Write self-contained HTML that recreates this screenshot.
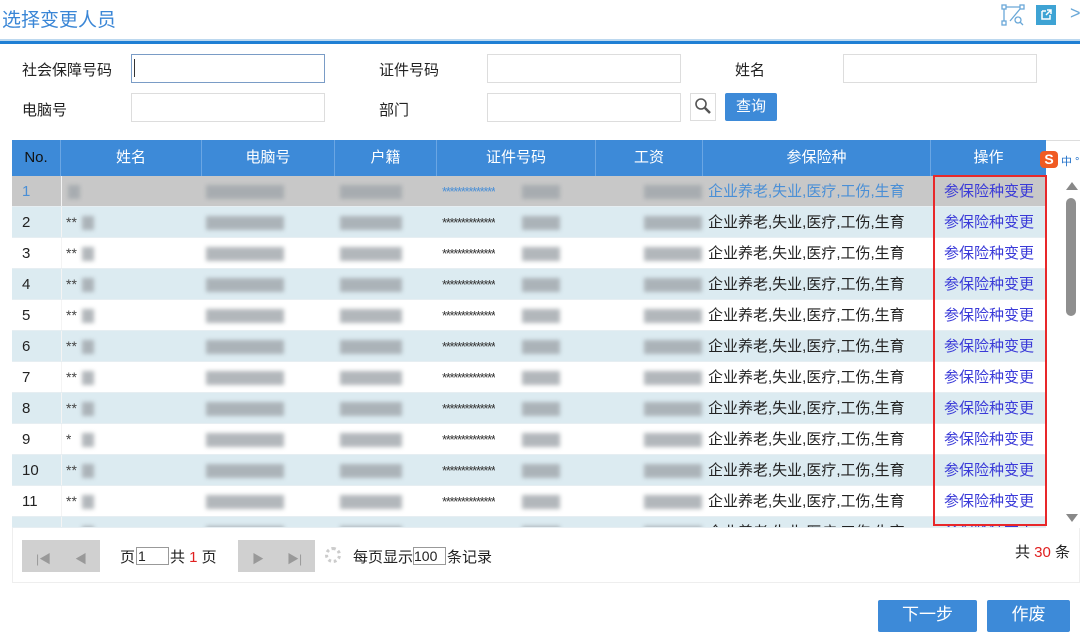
<!DOCTYPE html>
<html><head><meta charset="utf-8"><style>
*{margin:0;padding:0;box-sizing:border-box}
body{width:1080px;height:630px;background:#fff;position:relative;overflow:hidden;font-family:"Liberation Sans","Noto Sans CJK SC",sans-serif;font-size:14px;color:#222}
.a{position:absolute}
.lbl{font-size:15px;color:#222}
.inp{position:absolute;height:29px;border:1px solid #ddd;background:#fff}
.hd{position:absolute;top:140px;height:36px;background:#3d8ad8;color:#fff;font-size:15px;text-align:center;line-height:36px;border-right:1px solid #6aa6e4}
.row{position:absolute;left:12px;width:1034px;height:31px;border-bottom:1px solid #e6eef2}
.c{position:absolute;top:0;height:31px;line-height:31px;font-size:14px;white-space:nowrap;overflow:hidden}
.bl{position:absolute;background:#a0a6ab;filter:blur(2px);opacity:.8;height:14px;top:9px}
.btn{position:absolute;background:#3d8ad8;color:#fff;text-align:center;border-radius:2px}
</style></head><body>
<div class="a" style="left:2px;top:5px;font-size:19px;color:#3a86d6">选择变更人员</div>
<svg class="a" style="left:1000px;top:3px" width="26" height="24" viewBox="0 0 26 24"><g fill="none" stroke="#6aa8d8" stroke-width="1.3"><rect x="2" y="2" width="4" height="4"/><rect x="20" y="2" width="4" height="4"/><rect x="2" y="18" width="4" height="4"/><path d="M6 4H20M4 6V18M20 6L10 18"/><circle cx="18" cy="17" r="3"/><path d="M20 19l3 3"/></g></svg>
<div class="a" style="left:1036px;top:5px;width:20px;height:20px;background:#3ea3d4"></div>
<svg class="a" style="left:1036px;top:5px" width="20" height="20"><path d="M6 6h4M6 6v8h8v-4M10 10l5-5M11 5h4v4" stroke="#fff" stroke-width="1.5" fill="none"/></svg>
<div class="a" style="left:1070px;top:3px;font-size:18px;color:#6aa8d8">&gt;</div>
<div class="a" style="left:0;top:39px;width:1080px;height:2px;background:#bcd8ef"></div>
<div class="a" style="left:0;top:41px;width:1080px;height:3px;background:#1f7fd4"></div>

<div class="a lbl" style="left:22px;top:59px">社会保障号码</div>
<div class="inp" style="left:131px;top:54px;width:194px;border-color:#7a9cc6"></div>
<div class="a" style="left:134px;top:59px;width:1px;height:18px;background:#333"></div>
<div class="a lbl" style="left:379px;top:59px">证件号码</div>
<div class="inp" style="left:487px;top:54px;width:194px"></div>
<div class="a lbl" style="left:735px;top:59px">姓名</div>
<div class="inp" style="left:843px;top:54px;width:194px"></div>
<div class="a lbl" style="left:22px;top:99px">电脑号</div>
<div class="inp" style="left:131px;top:93px;width:194px"></div>
<div class="a lbl" style="left:379px;top:99px">部门</div>
<div class="inp" style="left:487px;top:93px;width:194px"></div>
<div class="inp" style="left:690px;top:93px;width:26px;height:28px"></div>
<svg class="a" style="left:693px;top:96px" width="20" height="20"><circle cx="8" cy="8" r="5" stroke="#555" stroke-width="1.6" fill="none"/><path d="M12 12l5 5" stroke="#555" stroke-width="2.5"/></svg>
<div class="btn" style="left:725px;top:93px;width:52px;height:28px;line-height:28px;font-size:15px">查询</div>

<div class="hd" style="left:12px;width:49px;color:#111">No.</div>
<div class="hd" style="left:61px;width:141px">姓名</div>
<div class="hd" style="left:202px;width:133px">电脑号</div>
<div class="hd" style="left:335px;width:102px">户籍</div>
<div class="hd" style="left:437px;width:159px">证件号码</div>
<div class="hd" style="left:596px;width:107px">工资</div>
<div class="hd" style="left:703px;width:228px">参保险种</div>
<div class="hd" style="left:931px;width:115px;border-right:none">操作</div>
<div class="a" style="left:1046px;top:140px;width:34px;height:36px;border-top:1px solid #ddd"></div>
<div class="a" style="left:1040px;top:151px;width:18px;height:17px;background:#f05a22;border-radius:4px;color:#fff;font-weight:bold;font-size:14px;text-align:center;line-height:17px">S</div>
<div class="a" style="left:1061px;top:153px;font-size:11px;color:#1e6fc8">中 °</div>

<div id="rows"></div>
<script>
var h='',tops=[176,207,238,269,300,331,362,393,424,455,486,517];
for(var i=0;i<12;i++){var t=tops[i];var bg=i==0?'#c8c8c8':(i%2?'#dcebf1':'#fff');var sel=i==0;var col=sel?'#4a8fd6':'#222';
h+='<div class="row" style="top:'+t+'px;background:'+bg+';height:'+(i==11?11:31)+'px;overflow:hidden">'+
'<div class="c" style="left:10px;color:'+col+';font-size:15px">'+(i+1)+'</div>'+
'<div class="c" style="left:54px;color:#444">'+(sel?'':(i==8?'*':'**'))+'</div>'+
'<div class="bl" style="left:'+(sel?56:70)+'px;width:12px"></div>'+
'<div class="bl" style="left:194px;width:78px"></div>'+
'<div class="bl" style="left:328px;width:62px"></div>'+
'<div class="c" style="left:430px;color:'+(sel?'#4a8fd6':'#333')+';font-size:13px;letter-spacing:-1.3px">**************</div>'+
'<div class="bl" style="left:510px;width:38px"></div>'+
'<div class="bl" style="left:632px;width:58px"></div>'+
'<div class="c" style="left:696px;color:'+(sel?'#4a8fd6':'#222')+';font-size:15px">企业养老,失业,医疗,工伤,生育</div>'+
'<div class="c" style="left:932px;color:#3a3ad8;font-size:15px">参保险种变更</div>'+
'<div class="a" style="left:49px;top:0;width:1px;height:31px;background:#f4f4f4"></div>'+
'</div>';}
document.getElementById('rows').innerHTML=h;
</script>
<div class="a" style="left:933px;top:175px;width:114px;height:351px;border:2px solid #e8282a"></div>
<div class="a" style="left:1062px;top:176px;width:18px;height:352px;background:#fff"></div>
<div class="a" style="left:1066px;top:182px;width:0;height:0;border-left:6px solid transparent;border-right:6px solid transparent;border-bottom:8px solid #888"></div>
<div class="a" style="left:1066px;top:198px;width:10px;height:118px;background:#8f8f8f;border-radius:5px"></div>
<div class="a" style="left:1066px;top:514px;width:0;height:0;border-left:6px solid transparent;border-right:6px solid transparent;border-top:8px solid #888"></div>

<div class="a" style="left:12px;top:528px;width:1068px;height:55px;border:1px solid #eee;border-top:none;background:#fff"></div>
<div class="a" style="left:22px;top:540px;width:78px;height:32px;background:#d0d0d0"></div>
<div class="a" style="left:36px;top:550px;color:#999;font-size:12px">|◀</div>
<div class="a" style="left:75px;top:550px;color:#999;font-size:12px">◀</div>
<div class="a" style="left:120px;top:546px;font-size:15px">页</div>
<div class="a" style="left:136px;top:547px;width:33px;height:18px;border:1px solid #999;font-size:14px;line-height:16px;padding-left:1px">1</div>
<div class="a" style="left:170px;top:546px;font-size:15px">共 <span style="color:#e02020">1</span> 页</div>
<div class="a" style="left:238px;top:540px;width:77px;height:32px;background:#d0d0d0"></div>
<div class="a" style="left:252px;top:550px;color:#999;font-size:12px">▶</div>
<div class="a" style="left:287px;top:550px;color:#999;font-size:12px">▶|</div>
<div class="a" style="left:325px;top:547px;width:16px;height:16px;border:3px dotted #ccc;border-radius:50%"></div>
<div class="a" style="left:353px;top:546px;font-size:15px">每页显示</div>
<div class="a" style="left:413px;top:547px;width:33px;height:18px;border:1px solid #999;font-size:14px;line-height:16px">100</div>
<div class="a" style="left:447px;top:546px;font-size:15px">条记录</div>
<div class="a" style="left:1015px;top:541px;font-size:15px">共 <span style="color:#e02020">30</span> 条</div>

<div class="btn" style="left:878px;top:600px;width:99px;height:32px;line-height:30px;font-size:17px">下一步</div>
<div class="btn" style="left:987px;top:600px;width:83px;height:32px;line-height:30px;font-size:17px">作废</div>
</body></html>
